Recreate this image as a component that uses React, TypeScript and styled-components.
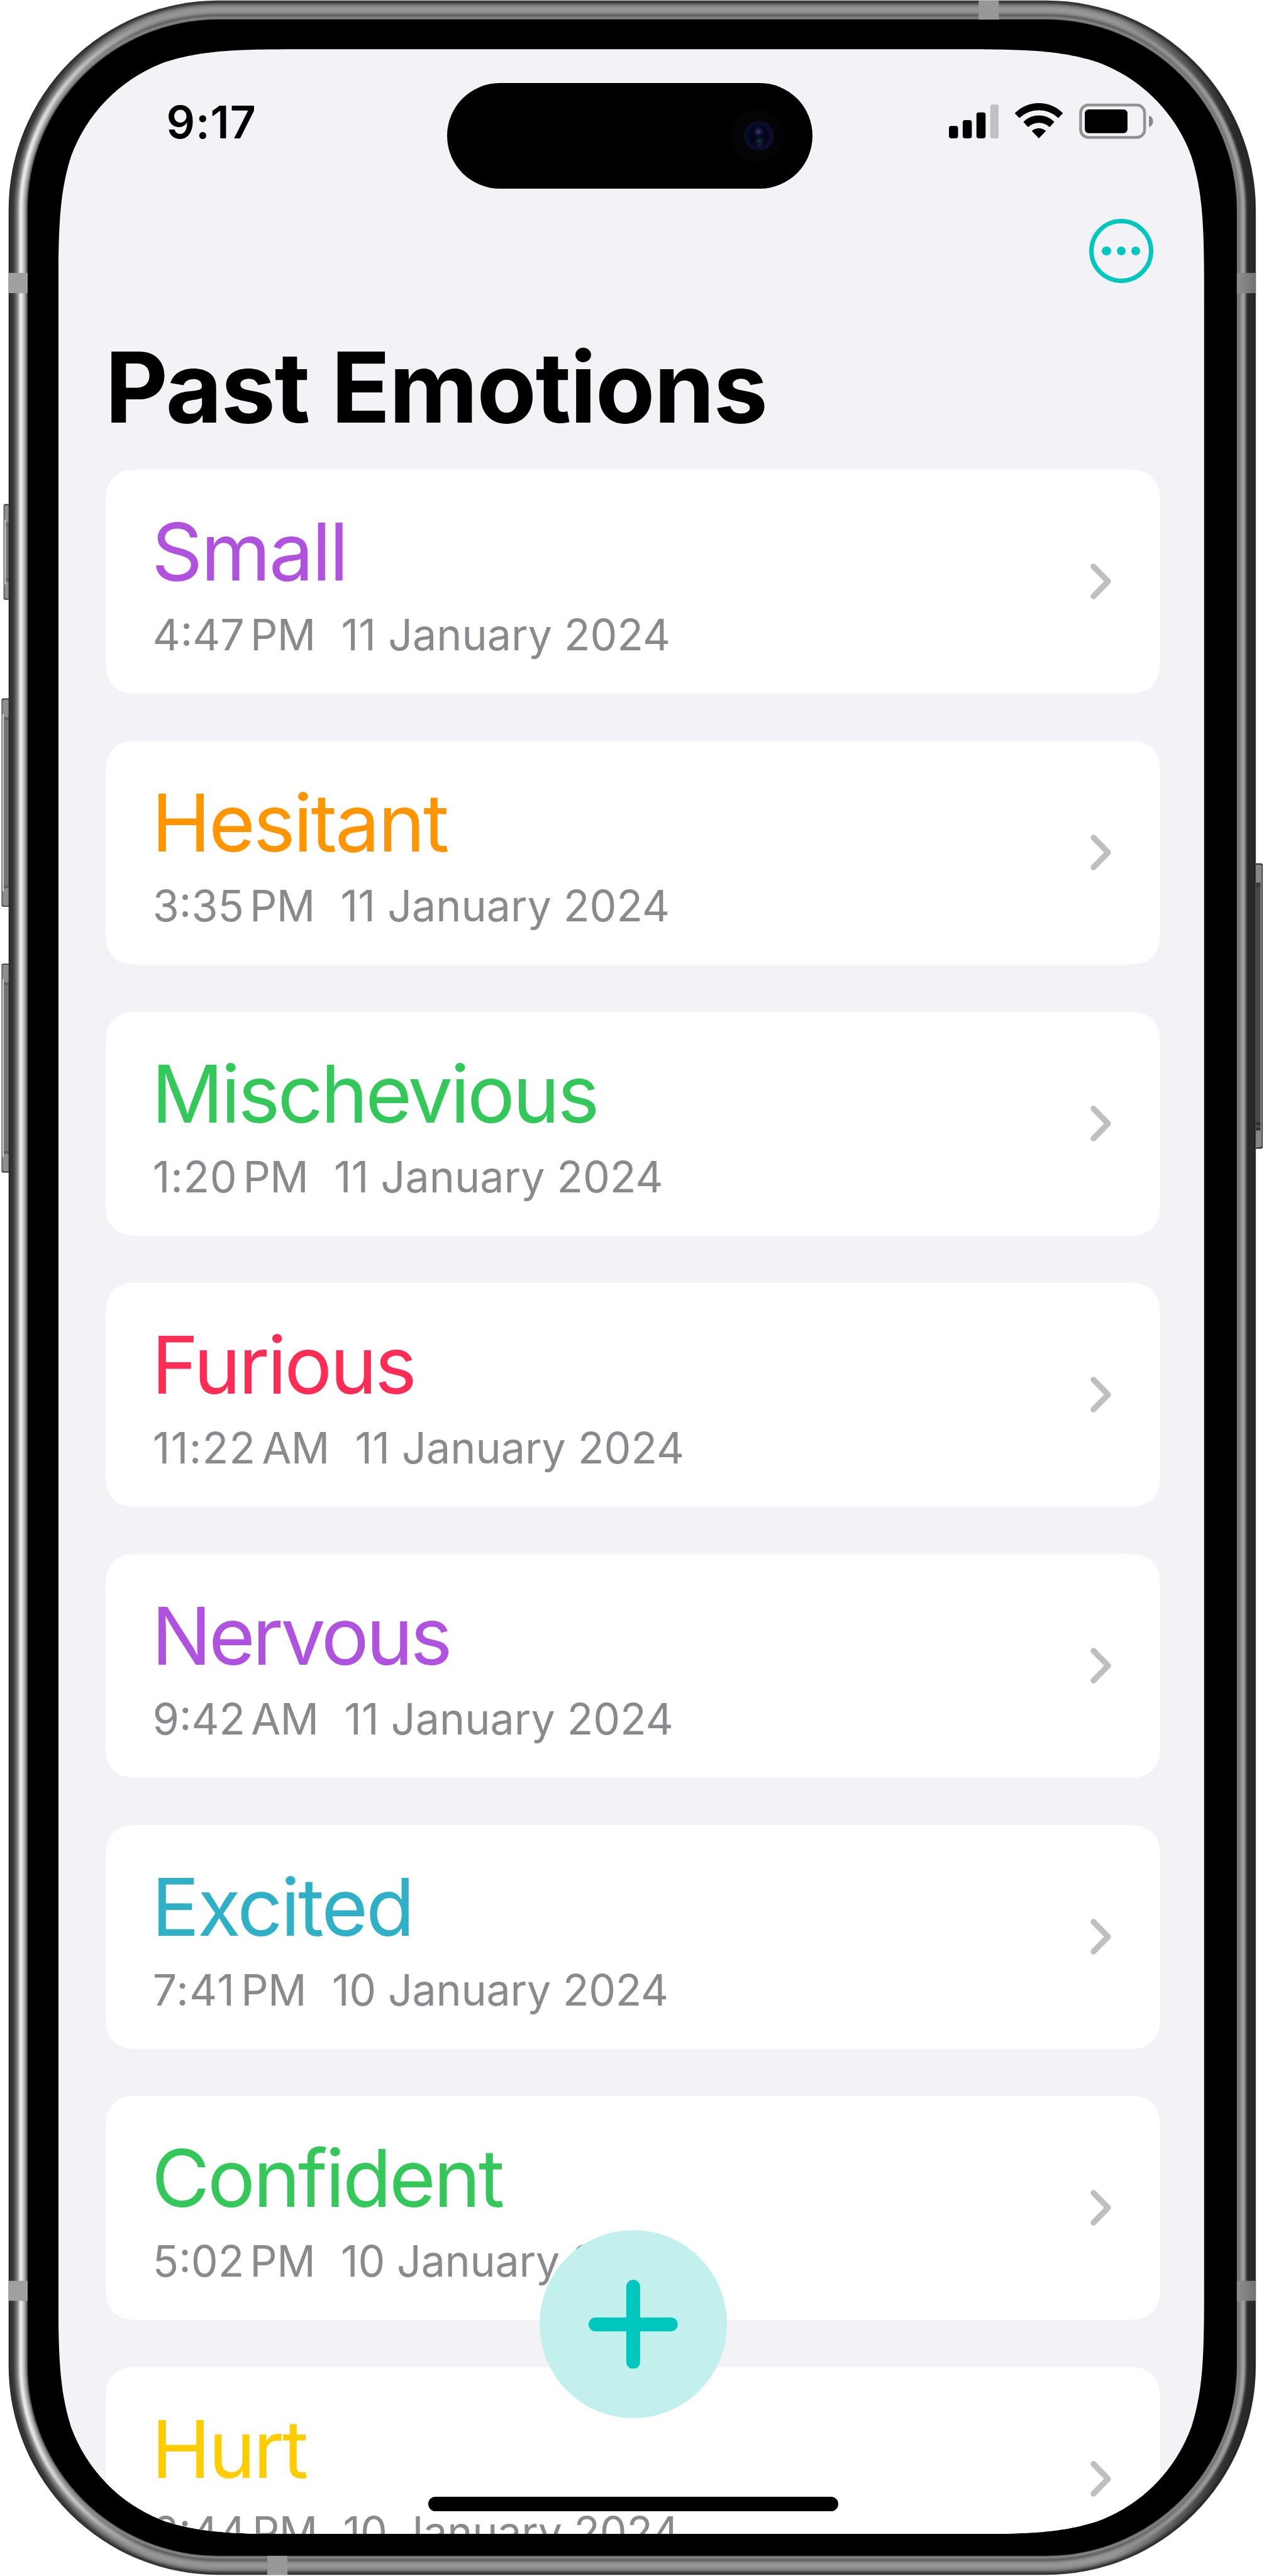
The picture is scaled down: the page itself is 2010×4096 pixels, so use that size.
import React from 'react';
import styled, { createGlobalStyle } from 'styled-components';

/* ---------- helpers ---------- */

/** Rounded rectangle with continuous-curvature corners. */
function continuousRect(w: number, h: number, r: number): string {
  const a = 1.52866 * r;
  const b = 1.08849 * r;
  const c = 0.86841 * r;
  const d = 0.63149 * r;
  const e = 0.37282 * r;
  const f = 0.16906 * r;
  const g = 0.07491 * r;
  return [
    `M${a} 0H${w - a}`,
    `C${w - b} 0 ${w - c} 0 ${w - d} ${g}`,
    `C${w - e} ${f} ${w - f} ${e} ${w - g} ${d}`,
    `C${w} ${c} ${w} ${b} ${w} ${a}`,
    `V${h - a}`,
    `C${w} ${h - b} ${w} ${h - c} ${w - g} ${h - d}`,
    `C${w - f} ${h - e} ${w - e} ${h - f} ${w - d} ${h - g}`,
    `C${w - c} ${h} ${w - b} ${h} ${w - a} ${h}`,
    `H${a}`,
    `C${b} ${h} ${c} ${h} ${d} ${h - g}`,
    `C${e} ${h - f} ${f} ${h - e} ${g} ${h - d}`,
    `C0 ${h - c} 0 ${h - b} 0 ${h - a}`,
    `V${a}`,
    `C0 ${b} 0 ${c} ${g} ${d}`,
    `C${f} ${e} ${e} ${f} ${d} ${g}`,
    `C${c} 0 ${b} 0 ${a} 0Z`,
  ].join('');
}

type Profile = [number, number][];

/** Grey levels across the metal band, from its outer edge inwards. */
const leftProfile: Profile = [[0, 30], [1.5, 46], [9, 56], [12, 84], [16, 118], [19, 160], [22, 224], [25, 236], [28, 204], [32, 160], [35, 112], [37, 60]];
const topProfile: Profile = [[0, 90], [1.5, 44], [5, 72], [9, 120], [13, 142], [19, 152], [24, 138], [27, 112], [29, 92], [31, 110], [35, 140], [37, 70]];
const rightProfile: Profile = [[0, 120], [1.5, 32], [5, 42], [15, 40], [18, 62], [20, 100], [22, 146], [26, 162], [30, 134], [33, 112], [35.5, 140], [37, 70]];

function level(profile: Profile, at: number): string {
  let i = 1;
  while (i < profile.length - 1 && profile[i][0] < at) i++;
  const [x0, y0] = profile[i - 1];
  const [x1, y1] = profile[i];
  const v = Math.round(y0 + ((y1 - y0) * Math.min(1, (at - x0) / (x1 - x0))));
  return `rgb(${v},${v},${v})`;
}

/* ---------- data ---------- */

interface Emotion {
  name: string;
  color: string;
  tracking: number;
  time: string;
  timeTracking?: number;
  meridiem: string;
  date: string;
  dateTracking?: number;
}

const emotions: Emotion[] = [
  { name: 'Small', color: '#af52de', tracking: -2.8, time: '4:47', meridiem: 'PM', date: '11 January 2024' },
  { name: 'Hesitant', color: '#ff9500', tracking: -3.1, time: '3:35', meridiem: 'PM', date: '11 January 2024' },
  { name: 'Mischevious', color: '#34c759', tracking: -3.8, time: '1:20', timeTracking: 0.7, meridiem: 'PM', date: '11 January 2024' },
  { name: 'Furious', color: '#ff2d55', tracking: -3.6, time: '11:22', timeTracking: 1.3, meridiem: 'AM', date: '11 January 2024' },
  { name: 'Nervous', color: '#af52de', tracking: -4.5, time: '9:42', meridiem: 'AM', date: '11 January 2024' },
  { name: 'Excited', color: '#30b0c7', tracking: -3.1, time: '7:41', timeTracking: 1.3, meridiem: 'PM', date: '10 January 2024', dateTracking: -0.25 },
  { name: 'Confident', color: '#34c759', tracking: -3.4, time: '5:02', meridiem: 'PM', date: '10 January 2024', dateTracking: -0.25 },
  { name: 'Hurt', color: '#ffcc00', tracking: -3.6, time: '2:44', meridiem: 'PM', date: '10 January 2024', dateTracking: -0.25 },
];

/* ---------- styles ---------- */

const SCREEN_W = 1822.1;
const SCREEN_H = 3951.3;
const CARD_W = 1676.7;
const CARD_H = 356.2;

const GlobalStyle = createGlobalStyle`
  html, body { margin: 0; padding: 0; background: #fff; }
  body { overflow: hidden; }
  * { box-sizing: border-box; }
  button { border: 0; padding: 0; margin: 0; background: none; font: inherit; }
`;

const Phone = styled.main`
  position: relative;
  width: 2010px;
  height: 4096px;
  padding: 78.2px 0 0 92.7px;
  overflow: hidden;
  font-family: Inter, 'Noto Sans', sans-serif;
`;

const BodyArt = styled.svg`
  position: absolute;
  inset: 0;
  width: 2010px;
  height: 4096px;
`;

const Screen = styled.div`
  position: relative;
  display: flex;
  flex-direction: column;
  width: ${SCREEN_W}px;
  height: ${SCREEN_H}px;
  overflow: hidden;
  background: #f2f2f7;
  clip-path: path('${continuousRect(SCREEN_W, SCREEN_H, 270)}');
`;

const StatusBar = styled.header`
  display: flex;
  justify-content: space-between;
  align-items: flex-start;
  flex: none;
  height: 90px;
  margin-top: 70.4px;
  padding: 0 80.9px 0 171.8px;
`;

const Clock = styled.time`
  font-size: 71.3px;
  font-weight: 600;
  line-height: 90px;
  letter-spacing: 0.9px;
  color: #000;
`;

const StatusIcons = styled.div`
  display: flex;
  gap: 26px;
  margin-top: 12.4px;

  svg {
    display: block;
    height: 61.2px;
  }
`;

const NavBar = styled.nav`
  display: flex;
  justify-content: flex-end;
  flex: none;
  margin-top: 109.6px;
  padding-right: 81px;
`;

const MoreButton = styled.button`
  display: flex;
  align-items: center;
  justify-content: center;
  gap: 9.2px;
  width: 102px;
  height: 102px;
  border: 7.4px solid #00c7be;
  border-radius: 50%;
`;

const Dot = styled.span`
  width: 14.2px;
  height: 14.2px;
  border-radius: 50%;
  background: #00c7be;
`;

const Title = styled.h1`
  flex: none;
  margin: 75.5px 0 41.2px 74.2px;
  font-size: 154.8px;
  font-weight: 700;
  line-height: 180px;
  letter-spacing: -1.73px;
  color: #000;
`;

const List = styled.ul`
  display: flex;
  flex-direction: column;
  flex: none;
  gap: 74.77px;
  margin: 0 0 0 75.4px;
  padding: 0;
  list-style: none;
`;

const Card = styled.li`
  display: flex;
  align-items: center;
  justify-content: space-between;
  width: ${CARD_W}px;
  height: ${CARD_H}px;
  padding: 0 78.2px 0 72.9px;
  background: #fff;
  clip-path: path('${continuousRect(CARD_W, CARD_H, 42.3)}');
`;

const Entry = styled.div`
  display: flex;
  flex-direction: column;
  gap: 12.4px;
  padding: 55.2px 0 48.6px;
`;

const Name = styled.h2<{ $color: string; $tracking: number }>`
  margin: 0;
  font-size: 126.7px;
  font-weight: 400;
  line-height: 150px;
  letter-spacing: ${(p) => p.$tracking}px;
  color: ${(p) => p.$color};
`;

const Stamp = styled.p`
  display: flex;
  gap: 41px;
  margin: 0 0 0 1.8px;
  font-size: 68.1px;
  line-height: 90px;
  white-space: pre;
  color: #8a8a8e;
`;

const StampPart = styled.span<{ $tracking?: number }>`
  letter-spacing: ${(p) => p.$tracking ?? 0}px;
`;

const Meridiem = styled.span`
  margin-left: -2.6px;
  letter-spacing: -0.7px;
`;

const Chevron = styled.svg`
  display: block;
  width: 33px;
  height: 57px;
`;

const Island = styled.div`
  position: absolute;
  top: 53.7px;
  left: 618.2px;
  display: flex;
  align-items: center;
  justify-content: flex-end;
  width: 581.2px;
  height: 168.3px;
  padding-right: 45px;
  border-radius: 84.2px;
  background: #000;
`;

const Camera = styled.svg`
  display: block;
  width: 84px;
  height: 84px;
`;

const AddButton = styled.button`
  position: absolute;
  top: 3468.2px;
  left: 765.1px;
  display: flex;
  align-items: center;
  justify-content: center;
  width: 298.4px;
  height: 298.4px;
  border-radius: 50%;
  background: #c1f0ed;
`;

const HomeIndicator = styled.div`
  position: absolute;
  top: 3892px;
  left: 588.5px;
  width: 651.4px;
  height: 23.1px;
  border-radius: 12px;
  background: #000;
`;

/* ---------- parts ---------- */

const ringCount = 37;
const rings = Array.from({ length: ringCount }, (_, i) => i);

function LeftKey({ x, y, h }: { x: number; y: number; h: number }) {
  const w = 20 - x;
  return (
    <g>
      <rect x={x} y={y} width={w} height={h} rx="4" fill="#2e2e2e" />
      <rect x={x + 1.3} y={y + 2} width={w} height={h - 4} rx="3" fill="#8e8e8e" />
      <rect x={x + 4} y={y + 36} width={w} height={h - 72} fill="#757575" />
      <rect x={x + 1.6} y={y + 30} width="2.8" height={h - 60} fill="#cfcfcf" />
      <rect x={x + 5} y={y + 38} width={w} height="4" fill="#606060" />
      <rect x={x + 5} y={y + h - 42} width={w} height="5" fill="#606060" />
    </g>
  );
}

function PhoneBody() {
  return (
    <BodyArt viewBox="0 0 2469 5031" preserveAspectRatio="none" aria-hidden="true">
      <defs>
        {rings.map((i) => {
          const l = level(leftProfile, i + 0.5);
          const t = level(topProfile, i + 0.5);
          const r = level(rightProfile, i + 0.5);
          return (
            <linearGradient key={i} id={`ring${i}`} gradientUnits="userSpaceOnUse" x1="0" y1="0" x2="2469" y2="0">
              <stop offset={56 / 2469} stopColor={l} />
              <stop offset={290 / 2469} stopColor={t} />
              <stop offset={2179 / 2469} stopColor={t} />
              <stop offset={2413 / 2469} stopColor={r} />
            </linearGradient>
          );
        })}
        <linearGradient id="bandRight">
          <stop offset="0" stopColor="#8e8e8e" />
          <stop offset="1" stopColor="#727272" />
        </linearGradient>
      </defs>
      <LeftKey x={7} y={984.6} h={187} />
      <LeftKey x={3} y={1364} h={407} />
      <LeftKey x={3} y={1882} h={408} />
      <g>
        <rect x="2448" y="1686" width="18.5" height="557.5" rx="4" fill="#222" />
        <rect x="2448" y="1688.5" width="17" height="552.5" rx="3" fill="#868686" />
        <rect x="2448" y="1724" width="14" height="484" fill="#484848" />
        <rect x="2448" y="1724" width="14" height="8" fill="#3a3a3a" />
        <rect x="2448" y="2192" width="14" height="5" fill="#2f2f2f" />
        <rect x="2448" y="2203" width="14" height="4" fill="#2f2f2f" />
      </g>
      {rings.map((i) => (
        <rect
          key={i}
          x={16.8 + i}
          y={0.9 + i}
          width={2436.4 - 2 * i}
          height={5027.9 - 2 * i}
          rx={409 - i}
          fill={`url(#ring${i})`}
        />
      ))}
      <rect x="16.8" y="533" width="37.4" height="39.5" fill="#a0a0a0" />
      <rect x="16.8" y="4454.5" width="37.4" height="39" fill="#a0a0a0" />
      <rect x="2415.6" y="533" width="37.6" height="39.5" fill="url(#bandRight)" />
      <rect x="2415.6" y="4454.5" width="37.6" height="39" fill="url(#bandRight)" />
      <rect x="1911.5" y="0.9" width="39.5" height="37.6" fill="#989898" />
      <rect x="522" y="4991.4" width="39.5" height="37.4" fill="#989898" />
      <rect x="54" y="38.4" width="2361.8" height="4953" rx="372" fill="#000" />
    </BodyArt>
  );
}

function Signal() {
  return (
    <svg viewBox="11 500 248 190" width="79.8">
      <rect x="11" y="622" width="45" height="61" rx="11" />
      <rect x="79" y="593" width="45" height="90" rx="11" />
      <rect x="147" y="555" width="45" height="128" rx="11" />
      <rect x="215" y="516" width="44" height="167" rx="11" fill="#c1c1c5" />
    </svg>
  );
}

function Wifi() {
  return (
    <svg viewBox="340 500 236 190" width="76" stroke="#000" strokeWidth="4" strokeLinejoin="round">
      <path d="M342 559A164 164 0 0 1 574 559L554 580A140 140 0 0 0 362 580Z" />
      <path d="M384 602A106 106 0 0 1 532 602L511 625A78 78 0 0 0 405 625Z" />
      <path d="M426 647A50 50 0 0 1 490 647L458 680Z" />
    </svg>
  );
}

function Battery() {
  return (
    <svg viewBox="656 500 365 190" width="117.5">
      <rect x="663.5" y="518.5" width="316" height="160" rx="38" fill="none" stroke="#929295" strokeWidth="14" />
      <rect x="684" y="540" width="211" height="118" rx="20" />
      <path d="M1001 571Q1021 578 1021 599Q1021 620 1001 627Z" fill="#868689" />
    </svg>
  );
}

function CameraLens() {
  return (
    <Camera viewBox="0 0 100 100" aria-hidden="true">
      <defs>
        <radialGradient id="lens">
          <stop offset="0" stopColor="#04041a" />
          <stop offset="0.62" stopColor="#04041a" />
          <stop offset="0.76" stopColor="#080d30" />
          <stop offset="1" stopColor="#0d0e19" />
        </radialGradient>
        <radialGradient id="glint">
          <stop offset="0" stopColor="#40417a" />
          <stop offset="1" stopColor="#17174a" stopOpacity="0" />
        </radialGradient>
        <radialGradient id="green">
          <stop offset="0" stopColor="#0d4040" />
          <stop offset="1" stopColor="#06202a" stopOpacity="0" />
        </radialGradient>
        <radialGradient id="violet">
          <stop offset="0" stopColor="#3c1054" />
          <stop offset="1" stopColor="#180a40" stopOpacity="0" />
        </radialGradient>
      </defs>
      <circle cx="50" cy="50" r="50" fill="#040305" />
      <circle cx="52" cy="50" r="28.5" fill="url(#lens)" />
      <circle cx="51" cy="42" r="11" fill="url(#glint)" />
      <circle cx="53" cy="60" r="11" fill="url(#green)" />
      <circle cx="53" cy="68" r="6" fill="url(#violet)" />
    </Camera>
  );
}

export default function App() {
  return (
    <>
      <GlobalStyle />
      <Phone>
        <PhoneBody />
        <Screen>
          <StatusBar>
            <Clock>9:17</Clock>
            <StatusIcons>
              <Signal />
              <Wifi />
              <Battery />
            </StatusIcons>
          </StatusBar>
          <NavBar>
            <MoreButton aria-label="More">
              <Dot />
              <Dot />
              <Dot />
            </MoreButton>
          </NavBar>
          <Title>Past Emotions</Title>
          <List>
            {emotions.map((e) => (
              <Card key={e.name}>
                <Entry>
                  <Name $color={e.color} $tracking={e.tracking}>{e.name}</Name>
                  <Stamp>
                    <StampPart $tracking={e.timeTracking}>
                      {e.time}
                      <Meridiem>{'\u202f' + e.meridiem}</Meridiem>
                    </StampPart>
                    <StampPart $tracking={e.dateTracking}>{e.date}</StampPart>
                  </Stamp>
                </Entry>
                <Chevron viewBox="0 0 33 57" fill="none" stroke="#bfbfbf" strokeWidth="9.2" strokeLinecap="round" strokeLinejoin="round">
                  <path d="M4.8 4.8L28 28.5L4.8 52.2" />
                </Chevron>
              </Card>
            ))}
          </List>
          <Island>
            <CameraLens />
          </Island>
          <AddButton aria-label="Add emotion">
            <svg width="141.8" height="141.8" viewBox="0 0 141.8 141.8" stroke="#00c7be" strokeWidth="22" strokeLinecap="round">
              <path d="M70.9 11V130.8M11 70.9H130.8" />
            </svg>
          </AddButton>
          <HomeIndicator />
        </Screen>
      </Phone>
    </>
  );
}
